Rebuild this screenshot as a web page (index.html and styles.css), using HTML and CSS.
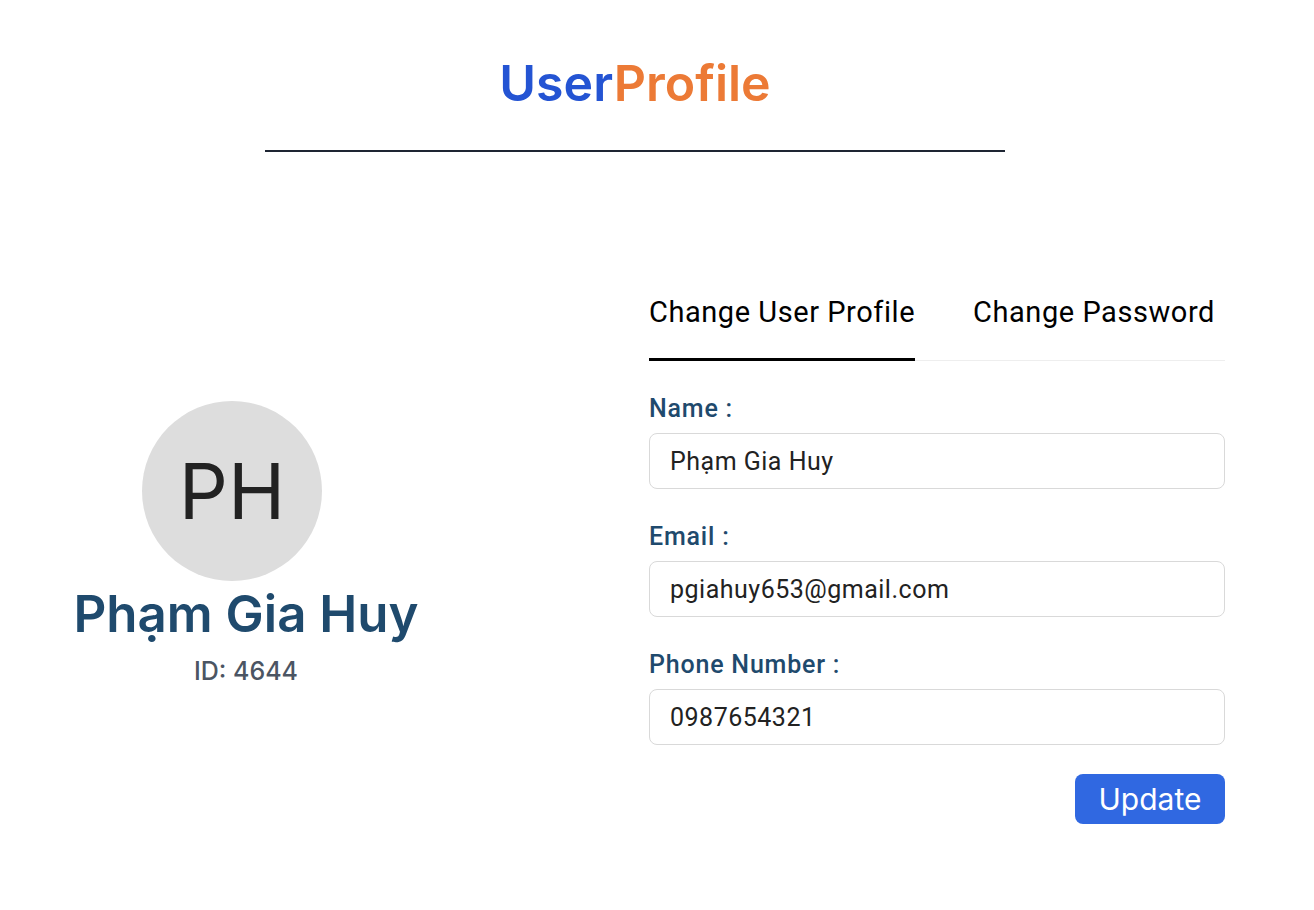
FILE: index.html
```html
<!DOCTYPE html>
<html lang="vi">
<head>
<meta charset="utf-8">
<title>UserProfile</title>
<link rel="stylesheet" href="styles.css">
</head>
<body>
<div class="page">
  <header class="header">
    <h1 class="title"><span class="title-user">User</span><span class="title-profile">Profile</span></h1>
    <div class="rule"></div>
  </header>
  <main class="main">
    <section class="summary">
      <div class="avatar">PH</div>
      <h2 class="full-name">Phạm Gia Huy</h2>
      <div class="user-id">ID: 4644</div>
    </section>
    <section class="panel">
      <nav class="tabs">
        <div class="tab tab-active">Change User Profile</div>
        <div class="tab">Change Password</div>
      </nav>
      <form class="form">
        <div class="fields">
          <div class="field">
            <label class="label">Name :</label>
            <div class="input">Phạm Gia Huy</div>
          </div>
          <div class="field">
            <label class="label">Email :</label>
            <div class="input">pgiahuy653@gmail.com</div>
          </div>
          <div class="field">
            <label class="label">Phone Number :</label>
            <div class="input">0987654321</div>
          </div>
        </div>
        <div class="actions">
          <button type="button" class="btn">Update</button>
        </div>
      </form>
    </section>
  </main>
</div>
</body>
</html>
```
FILE: styles.css
```css
* { box-sizing: border-box; }
body {
  margin: 0;
  background: #fff;
  font-family: "Roboto", "Liberation Sans", sans-serif;
}
.page {
  width: 1270px;
}
.header {
  display: flex;
  flex-direction: column;
  align-items: center;
  padding-top: 51px;
}
.title {
  margin: 0;
  font-family: "Inter", sans-serif;
  font-weight: 600;
  font-size: 50px;
  line-height: 64px;
}
.title-user { color: #2454d3; }
.title-profile { color: #ec7a36; }
.rule {
  margin-top: 35px;
  width: 740px;
  height: 2px;
  background: #1e2533;
}
.main {
  display: grid;
  grid-template-columns: 492px 576px;
  column-gap: 157px;
  align-items: start;
  margin-top: 138px;
}
.summary {
  display: flex;
  flex-direction: column;
  align-items: center;
  padding-top: 111px;
}
.avatar {
  width: 180px;
  height: 180px;
  border-radius: 50%;
  background: #dddddd;
  color: #222;
  display: flex;
  align-items: center;
  justify-content: center;
  font-family: "Inter", sans-serif;
  font-size: 77px;
  font-weight: 400;
  margin-right: 28px;
}
.full-name {
  margin: 4px 0 0;
  font-family: "Inter", sans-serif;
  font-weight: 600;
  font-size: 51px;
  line-height: 58px;
  color: #1f4a6d;
}
.user-id {
  margin-top: 13px;
  font-family: "Inter", sans-serif;
  font-size: 25px;
  line-height: 30px;
  font-weight: 500;
  color: #4b5563;
}
.tabs {
  display: flex;
  gap: 58px;
  border-bottom: 1px solid #eeeeee;
}
.tab {
  font-size: 29px;
  letter-spacing: 0.55px;
  line-height: 36px;
  padding: 4px 0 28px;
  color: #000;
  margin-bottom: -1px;
  border-bottom: 3px solid transparent;
}
.tab-active {
  border-bottom-color: #000;
}
.form {
  display: flex;
  flex-direction: column;
  padding-top: 34px;
}
.fields {
  display: flex;
  flex-direction: column;
  gap: 34px;
}
.field {
  display: flex;
  flex-direction: column;
}
.label {
  font-size: 25px;
  font-weight: 500;
  letter-spacing: 0.8px;
  line-height: 28px;
  color: #1f4a6d;
  margin-bottom: 10px;
}
.input {
  height: 56px;
  border: 1px solid #d9d9d9;
  border-radius: 8px;
  padding: 0 20px;
  display: flex;
  align-items: center;
  font-size: 25px;
  letter-spacing: 0.5px;
  color: #222;
}
.actions {
  display: flex;
  justify-content: flex-end;
  margin-top: 29px;
}
.btn {
  width: 150px;
  height: 50px;
  border: none;
  border-radius: 8px;
  background: #3068e1;
  color: #fff;
  font-family: "Inter", sans-serif;
  font-size: 30px;
  font-weight: 400;
  padding: 0;
}
```
